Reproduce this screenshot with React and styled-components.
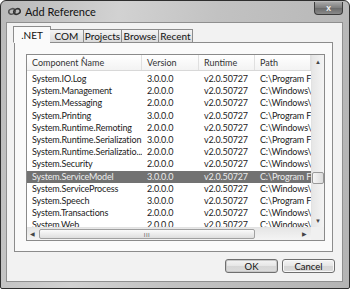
import React from 'react';
import styled, { createGlobalStyle } from 'styled-components';

const GlobalStyle = createGlobalStyle`
  html, body {
    margin: 0;
    padding: 0;
    background: #fff;
  }
  body {
    font-family: Lato, "Noto Sans", sans-serif;
  }
`;

const Window = styled.div`
  width: 350px;
  height: 289px;
  box-sizing: border-box;
  display: flex;
  flex-direction: column;
  border: 1px solid #2e2e2e;
  border-radius: 6px 6px 2px 2px;
  background: linear-gradient(100deg, #b9b9b9 0%, #d2d2d2 30%, #c2c2c2 55%, #b4b4b4 100%);
  overflow: hidden;
`;

const TitleBar = styled.div`
  height: 21px;
  display: flex;
  align-items: center;
  padding: 0 6px 0 7px;
  gap: 4px;
`;

const Title = styled.div`
  flex: 1;
  font-size: 11px;
  color: #111;
`;

const CloseButton = styled.div`
  width: 27px;
  height: 12px;
  margin-top: -7px;
  border: 1px solid #3c3c3c;
  border-top: none;
  border-radius: 0 0 4px 4px;
  background: linear-gradient(#a8a8a8, #7c7c7c 50%, #6a6a6a 51%, #8a8a8a);
  color: #f2f2f2;
  font-size: 9px;
  font-weight: bold;
  display: flex;
  align-items: center;
  justify-content: center;
`;

const Client = styled.div`
  flex: 1;
  margin: 0 6px 6px 5px;
  background: #f2f2f2;
  border: 1px solid #8f8f8f;
  display: flex;
  flex-direction: column;
`;

const TabStrip = styled.div`
  display: flex;
  align-items: flex-end;
  height: 20px;
  padding-left: 7px;
  margin-bottom: -1px;
  position: relative;
  z-index: 1;
`;

const Tab = styled.div`
  height: ${p => (p.active ? '17px' : '14px')};
  width: ${p => p.w}px;
  margin: 0 ${p => (p.active ? '-1px' : '0')};
  box-sizing: border-box;
  border: 1px solid #8c8c8c;
  border-bottom: ${p => (p.active ? '1px solid #fafafa' : '1px solid #8c8c8c')};
  border-left: ${p => (p.first || p.active ? '1px solid #8c8c8c' : 'none')};
  background: ${p => (p.active ? '#fafafa' : 'linear-gradient(#f4f4f4, #dadada)')};
  font-size: 10px;
  color: #111;
  display: flex;
  justify-content: center;
  align-items: ${p => (p.active ? 'flex-start' : 'center')};
  padding-top: ${p => (p.active ? '2px' : '0')};
  white-space: nowrap;
`;

const TabPanel = styled.div`
  height: 210px;
  box-sizing: border-box;
  margin: 0 9px 0 7px;
  border: 1px solid #8c8c8c;
  background: #fafafa;
  padding: 11px 7px 10px 11px;
`;

const ListView = styled.div`
  height: 100%;
  box-sizing: border-box;
  border: 1px solid #8a8a8a;
  background: #fff;
  display: grid;
  grid-template-columns: 1fr 13px;
  grid-template-rows: 1fr 13px;
  overflow: hidden;
`;

const ListBody = styled.div`
  overflow: hidden;
  display: flex;
  flex-direction: column;
`;

const HeaderRow = styled.div`
  display: grid;
  grid-template-columns: 115px 57px 56px 1fr;
  height: 15px;
  flex-shrink: 0;
  border-bottom: 1px solid #d8d8d8;
  background: linear-gradient(#ffffff, #f3f3f3);
  margin-bottom: 2px;
`;

const HeaderCell = styled.div`
  position: relative;
  font-size: 9px;
  color: #333;
  padding-left: 5px;
  padding-top: 1px;
  line-height: 14px;
  border-right: 1px solid #e0e0e0;
  white-space: nowrap;
`;

const SortCaret = styled.span`
  position: absolute;
  left: 54px;
  top: 0;
  font-size: 5px;
  line-height: 5px;
  color: #777;
`;

const Row = styled.div`
  display: grid;
  grid-template-columns: 115px 57px 56px 1fr;
  height: 12.2px;
  flex-shrink: 0;
  background: ${p => (p.selected ? '#727272' : 'transparent')};
  color: ${p => (p.selected ? '#ececec' : '#1c1c1c')};
`;

const Cell = styled.div`
  font-size: 9px;
  letter-spacing: -0.15px;
  line-height: 12.2px;
  padding-left: 5px;
  white-space: nowrap;
  overflow: hidden;
`;

const VScroll = styled.div`
  background: linear-gradient(90deg, #e6e6e6, #f4f4f4);
  border-left: 1px solid #e2e2e2;
  display: flex;
  flex-direction: column;
  align-items: center;
  padding-top: 1px;
`;

const Arrow = styled.div`
  font-size: 6px;
  color: #444;
  height: 12px;
  line-height: 12px;
`;

const VThumb = styled.div`
  width: 10px;
  height: 10px;
  margin-top: 104px;
  border: 1px solid #999;
  border-radius: 2px;
  background: linear-gradient(90deg, #f6f6f6, #dcdcdc);
`;

const Spacer = styled.div`
  flex: 1;
`;

const HScroll = styled.div`
  background: linear-gradient(#e6e6e6, #f4f4f4);
  border-top: 1px solid #e2e2e2;
  display: flex;
  align-items: center;
  padding: 0 4px 0 3px;
`;

const HThumb = styled.div`
  width: 216px;
  height: 10px;
  margin-left: 4px;
  box-sizing: border-box;
  border: 1px solid #a0a0a0;
  border-radius: 2px;
  background: linear-gradient(#fafafa, #dedede);
  display: flex;
  align-items: center;
  justify-content: center;
  font-size: 6px;
  color: #666;
  letter-spacing: 0.5px;
`;

const Corner = styled.div`
  background: #f0f0f0;
`;

const ButtonRow = styled.div`
  display: flex;
  justify-content: flex-end;
  gap: 4px;
  padding: 7px 7px 0 0;
`;

const DialogButton = styled.div`
  width: 53px;
  height: 14px;
  box-sizing: border-box;
  border: 1px solid #6f6f6f;
  border-radius: 3px;
  background: linear-gradient(#f4f4f4, #e6e6e6 50%, #d6d6d6 51%, #dcdcdc);
  font-size: 9.5px;
  color: #111;
  display: flex;
  align-items: center;
  justify-content: center;
  box-shadow: ${p => (p.primary ? 'inset 0 0 0 1px #c8c8c8' : 'inset 0 0 0 1px #f8f8f8')};
`;

const RefIcon = () => (
  <svg width="13" height="9" viewBox="0 0 13 9">
    <ellipse cx="4" cy="4.5" rx="3.3" ry="2.6" fill="none" stroke="#555" strokeWidth="1.6" transform="rotate(-25 4 4.5)" />
    <ellipse cx="9" cy="4.5" rx="3.3" ry="2.6" fill="none" stroke="#333" strokeWidth="1.6" transform="rotate(-25 9 4.5)" />
  </svg>
);

const rows = [
  ['System.IO.Log', '3.0.0.0', 'v2.0.50727', 'C:\\Program Files'],
  ['System.Management', '2.0.0.0', 'v2.0.50727', 'C:\\Windows\\Microsoft'],
  ['System.Messaging', '2.0.0.0', 'v2.0.50727', 'C:\\Windows\\Microsoft'],
  ['System.Printing', '3.0.0.0', 'v2.0.50727', 'C:\\Program Files'],
  ['System.Runtime.Remoting', '2.0.0.0', 'v2.0.50727', 'C:\\Windows\\Microsoft'],
  ['System.Runtime.Serialization', '3.0.0.0', 'v2.0.50727', 'C:\\Program Files'],
  ['System.Runtime.Serializatio...', '2.0.0.0', 'v2.0.50727', 'C:\\Windows\\Microsoft'],
  ['System.Security', '2.0.0.0', 'v2.0.50727', 'C:\\Windows\\Microsoft'],
  ['System.ServiceModel', '3.0.0.0', 'v2.0.50727', 'C:\\Program Files', true],
  ['System.ServiceProcess', '2.0.0.0', 'v2.0.50727', 'C:\\Windows\\Microsoft'],
  ['System.Speech', '3.0.0.0', 'v2.0.50727', 'C:\\Program Files'],
  ['System.Transactions', '2.0.0.0', 'v2.0.50727', 'C:\\Windows\\Microsoft'],
  ['System.Web', '2.0.0.0', 'v2.0.50727', 'C:\\Windows\\Microsoft'],
];

const tabs = [
  { label: '.NET', w: 38, active: true },
  { label: 'COM', w: 34 },
  { label: 'Projects', w: 38 },
  { label: 'Browse', w: 37 },
  { label: 'Recent', w: 34 },
];

const App = () => (
  <>
    <GlobalStyle />
    <Window>
      <TitleBar>
        <RefIcon />
        <Title>Add Reference</Title>
        <CloseButton>x</CloseButton>
      </TitleBar>
      <Client>
        <TabStrip>
          {tabs.map((t, i) => (
            <Tab key={t.label} active={t.active} first={i === 0} w={t.w}>
              {t.label}
            </Tab>
          ))}
        </TabStrip>
        <TabPanel>
          <ListView>
            <ListBody>
              <HeaderRow>
                <HeaderCell>
                  Component Name
                  <SortCaret>▲</SortCaret>
                </HeaderCell>
                <HeaderCell>Version</HeaderCell>
                <HeaderCell>Runtime</HeaderCell>
                <HeaderCell>Path</HeaderCell>
              </HeaderRow>
              {rows.map(r => (
                <Row key={r[0]} selected={r[4]}>
                  <Cell>{r[0]}</Cell>
                  <Cell>{r[1]}</Cell>
                  <Cell>{r[2]}</Cell>
                  <Cell>{r[3]}</Cell>
                </Row>
              ))}
            </ListBody>
            <VScroll>
              <Arrow>▲</Arrow>
              <VThumb />
              <Spacer />
              <Arrow>▼</Arrow>
            </VScroll>
            <HScroll>
              <Arrow>◀</Arrow>
              <HThumb>III</HThumb>
              <Spacer />
              <Arrow>▶</Arrow>
            </HScroll>
            <Corner />
          </ListView>
        </TabPanel>
        <ButtonRow>
          <DialogButton primary>OK</DialogButton>
          <DialogButton>Cancel</DialogButton>
        </ButtonRow>
      </Client>
    </Window>
  </>
);

export default App;
